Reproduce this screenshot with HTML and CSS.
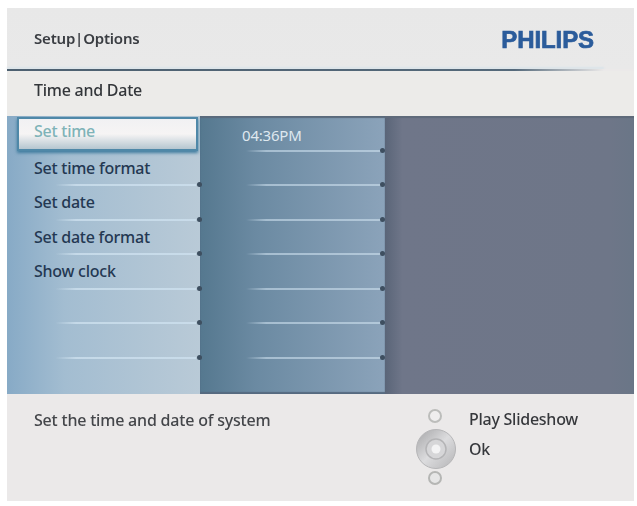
FILE: index.html
```html
<!DOCTYPE html>
<html lang="en">
<head>
<meta charset="utf-8">
<title>Setup | Options</title>
<link rel="stylesheet" href="styles.css">
</head>
<body>
<main class="panel">
  <header class="header">
    <span class="crumb">Setup|Options</span>
    <span class="logo">PHILIPS</span>
  </header>
  <div class="rule"></div>
  <h1 class="title">Time and Date</h1>
  <section class="content">
    <ul class="col col-menu">
      <li class="row selected">Set time</li>
      <li class="row">Set time format</li>
      <li class="row">Set date</li>
      <li class="row">Set date format</li>
      <li class="row">Show clock</li>
      <li class="row"></li>
      <li class="row"></li>
      <li class="row"></li>
    </ul>
    <ul class="col col-value">
      <li class="row">04:36PM</li>
      <li class="row"></li>
      <li class="row"></li>
      <li class="row"></li>
      <li class="row"></li>
      <li class="row"></li>
      <li class="row"></li>
      <li class="row"></li>
    </ul>
    <div class="col-empty"></div>
  </section>
  <footer class="footer">
    <p class="hint">Set the time and date of system</p>
    <div class="controls">
      <svg class="pad" width="42" height="78" viewBox="0 0 42 78" aria-hidden="true">
        <defs>
          <linearGradient id="ring" x1="0" y1="0" x2="1" y2="1">
            <stop offset="0" stop-color="#a4a4a6"/>
            <stop offset="0.5" stop-color="#dcdcde"/>
            <stop offset="1" stop-color="#b4b4b6"/>
          </linearGradient>
        </defs>
        <circle cx="20" cy="8" r="6" fill="#efeeee" stroke="#bcbdbb" stroke-width="2"/>
        <circle cx="21" cy="41" r="19.5" fill="url(#ring)" stroke="#b5b5b7"/>
        <circle cx="21" cy="41" r="10" fill="#d6d6d8" stroke="#b4b4b6" stroke-width="1.5"/>
        <circle cx="21" cy="41" r="4.5" fill="#f3f3f4"/>
        <circle cx="20" cy="70" r="6" fill="#e6e6e6" stroke="#b5b6b4" stroke-width="2"/>
      </svg>
      <div class="labels">
        <span class="label">Play Slideshow</span>
        <span class="label">Ok</span>
      </div>
    </div>
  </footer>
</main>
</body>
</html>
```
FILE: styles.css
```css
* { box-sizing: border-box; }
html, body { margin: 0; background: #fff; }
body { width: 637px; height: 506px; padding: 8px 3px 5px 7px; font-family: "Noto Sans", "Open Sans", sans-serif; }
.panel { height: 493px; display: flex; flex-direction: column; background: #ebe9e9; }
.header { height: 61px; flex: none; display: flex; justify-content: space-between; align-items: center; padding: 0 40px 2px 27px; background: linear-gradient(#e8e8e8, #e9e9e9); }
.crumb { font-size: 15px; font-weight: 600; color: #3a3d42; filter: blur(.6px); letter-spacing: -.2px; }
.logo { margin-top: 4px; font-family: "Liberation Sans", Arial, sans-serif; font-size: 24px; font-weight: 700; color: #2b5c9b; letter-spacing: -.1px; -webkit-text-stroke: .7px #2b5c9b; filter: blur(.6px); }
.rule { height: 2px; flex: none; margin-right: 30px; background: linear-gradient(to right, #4d6070 0, #55697a 85%, rgba(85,105,122,0) 100%); box-shadow: 0 -2px 2px #d9e4ea; }
.title { margin: 0; height: 45px; flex: none; display: flex; align-items: center; padding: 0 0 7px 27px; font-size: 16px; font-weight: 500; letter-spacing: -.25px; color: #33363a; filter: blur(.6px); background: #ecebe9; }
.content { height: 278px; flex: none; display: grid; grid-template-columns: 193px 185px 1fr; }
.col { list-style: none; margin: 0; padding: 0; display: grid; grid-template-rows: repeat(8, 34.5px); }
.col-menu { background: linear-gradient(to right, #87aac6 0, #a3bdd1 30%, #b9cad7 100%); }
.col-value { background: linear-gradient(to right, #55788f 0, #6b8aa2 30%, #8ba3ba 100%); box-shadow: inset 0 -2px 1px #566a80, inset 0 2px 1px #5a6a7c; }
.col-empty { background: linear-gradient(to right, #5a6578 0, #6f7689 7%, #6e7688 90%, #6a7687 100%); box-shadow: inset 0 2px 1px #5f6a7a; }
.row { position: relative; display: flex; align-items: center; }
.row::before { content: ""; position: absolute; left: 25%; right: 4px; bottom: -1px; height: 2px; background: linear-gradient(to right, rgba(205,224,238,0), rgba(205,224,238,.8) 15%, rgba(205,224,238,.8) 100%); filter: blur(.5px); }
.row::after { content: ""; position: absolute; right: -2px; bottom: -2px; width: 5px; height: 5px; border-radius: 50%; background: #3e4f60; filter: blur(.5px); }
.row:last-child::before, .row:last-child::after { display: none; }
.col-menu .row { padding-left: 27px; font-size: 16px; font-weight: 500; letter-spacing: -.25px; color: #243852; }
.col-value .row { padding-left: 42px; font-size: 15px; color: #dfe8ef; letter-spacing: -.2px; }
.col-value .row::before { left: 25%; opacity: .75; }
.col-value .row::after { right: 0; }
.col-menu .selected { margin: 1px 2px 0 10px; height: 34px; padding: 0 0 6px 15px; color: #7fb3b8; border: 2px solid #4f88a8; background: linear-gradient(#f1f1f3 0, #f6f4f4 50%, #b5c6d0 100%); box-shadow: 0 2px 3px #3f7c9f; }
.col-menu .selected::before, .col-menu .selected::after { display: none; }
.col-value .row:first-child { align-items: flex-start; padding-top: 9px; }
.footer { flex: 1; display: flex; justify-content: space-between; padding: 15px 56px 0 27px; background: #ebe9e9; }
.hint { margin: 0; font-size: 16px; font-weight: 500; letter-spacing: -.2px; color: #44464a; filter: blur(.6px); }
.controls { display: flex; gap: 12px; margin-top: -1px; }
.pad { flex: none; filter: blur(.6px); }
.labels { display: flex; flex-direction: column; gap: 8px; }
.label { font-size: 16px; font-weight: 500; letter-spacing: -.25px; color: #36383c; filter: blur(.6px); }
```
